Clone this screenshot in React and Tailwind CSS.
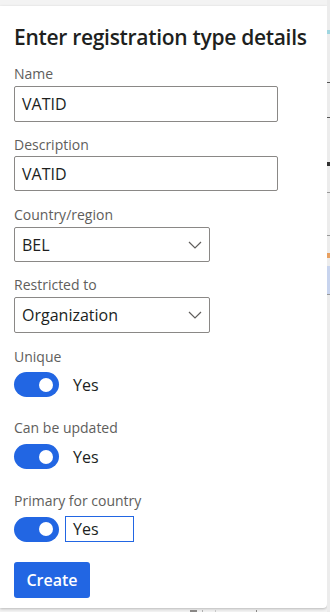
import React from 'react';

function Chevron() {
  return (
    <svg width="14" height="8" viewBox="0 0 14 8" fill="none" className="shrink-0">
      <path d="M1 1l6 6 6-6" stroke="#605e5c" strokeWidth="1.2" />
    </svg>
  );
}

function Toggle() {
  return (
    <div className="w-[45px] h-[25px] rounded-full bg-[#2266e3] flex items-center justify-end pr-[6px] shrink-0">
      <div className="w-[14px] h-[14px] rounded-full bg-white" />
    </div>
  );
}

function Label({ children }) {
  return <div className="text-[14px] leading-[20px] text-[#605e5c]">{children}</div>;
}

export default function App() {
  return (
    <div
      className="w-[330px] h-[612px] bg-[#f3f3f3] overflow-hidden flex"
      style={{ fontFamily: '"Open Sans", "Noto Sans", sans-serif' }}
    >
      <div className="flex flex-col">
        <div className="w-[327px] h-[604px] mt-[6px] bg-white shadow-[0_1px_3px_rgba(0,0,0,0.25)] rounded-br-[4px] px-[14px] pt-[17px] flex flex-col">
          <h1 className="text-[21px] leading-[28px] font-semibold text-[#201f1e] tracking-[-0.3px] whitespace-nowrap">
            Enter registration type details
          </h1>

          <div className="mt-[13px]">
            <Label>Name</Label>
            <div className="mt-[2px] w-[264px] h-[36px] border border-[#8a8886] rounded-[2px] px-[7px] flex items-center text-[16px] text-[#201f1e]">
              VATID
            </div>
          </div>

          <div className="mt-[13px]">
            <Label>Description</Label>
            <div className="mt-[1px] w-[264px] h-[35px] border border-[#8a8886] rounded-[2px] px-[7px] flex items-center text-[16px] text-[#201f1e]">
              VATID
            </div>
          </div>

          <div className="mt-[14px]">
            <Label>Country/region</Label>
            <div className="mt-[2px] w-[196px] h-[35px] border border-[#8a8886] rounded-[2px] px-[7px] flex items-center justify-between text-[16px] text-[#201f1e]">
              <span>BEL</span>
              <Chevron />
            </div>
          </div>

          <div className="mt-[13px]">
            <Label>Restricted to</Label>
            <div className="mt-[2px] w-[196px] h-[36px] border border-[#8a8886] rounded-[2px] px-[7px] flex items-center justify-between text-[16px] text-[#201f1e]">
              <span>Organization</span>
              <Chevron />
            </div>
          </div>

          <div className="mt-[14px]">
            <Label>Unique</Label>
            <div className="mt-[5px] flex items-center gap-[14px]">
              <Toggle />
              <span className="text-[16px] leading-[22px] text-[#201f1e]">Yes</span>
            </div>
          </div>

          <div className="mt-[21px]">
            <Label>Can be updated</Label>
            <div className="mt-[6px] flex items-center gap-[14px]">
              <Toggle />
              <span className="text-[16px] leading-[22px] text-[#201f1e]">Yes</span>
            </div>
          </div>

          <div className="mt-[22px]">
            <Label>Primary for country</Label>
            <div className="mt-[5px] flex items-center gap-[6px]">
              <Toggle />
              <div className="w-[69px] h-[26px] border border-[#2266e3] px-[7px] flex items-center text-[16px] text-[#201f1e]">
                Yes
              </div>
            </div>
          </div>

          <button className="mt-[20px] w-[76px] h-[36px] rounded-[3px] bg-[#2266e3] text-white text-[16px] font-semibold flex items-center justify-center">
            Create
          </button>
        </div>
        {/* page behind the panel, bottom edge */}
        <div className="flex mt-[2px] h-[2px]">
          <div className="ml-[190px] w-[7px] bg-[#8a8886]" />
          <div className="ml-[5px] w-[1px] bg-[#b0b0b0]" />
          <div className="ml-[12px] w-[1px] bg-[#c8c8c8]" />
          <div className="ml-[40px] w-[1px] bg-[#8a8886]" />
        </div>
      </div>
      {/* page behind the panel, right edge */}
      <div className="flex-1 flex flex-col bg-[#ececec] pt-[30px]">
        <div className="h-[4px] bg-[#9fd6e0]" />
        <div className="mt-[48px] h-[1px] bg-[#555]" />
        <div className="mt-[34px] h-[1px] bg-[#555]" />
        <div className="mt-[44px] h-[4px] bg-[#333]" />
        <div className="mt-[26px] h-[1px] bg-[#999]" />
        <div className="mt-[42px] h-[1px] bg-[#999]" />
        <div className="mt-[17px] h-[5px] bg-[#e8a060]" />
        <div className="mt-[8px] h-[28px] bg-[#c8d4ee]" />
        <div className="h-[1px] bg-[#999]" />
      </div>
    </div>
  );
}
